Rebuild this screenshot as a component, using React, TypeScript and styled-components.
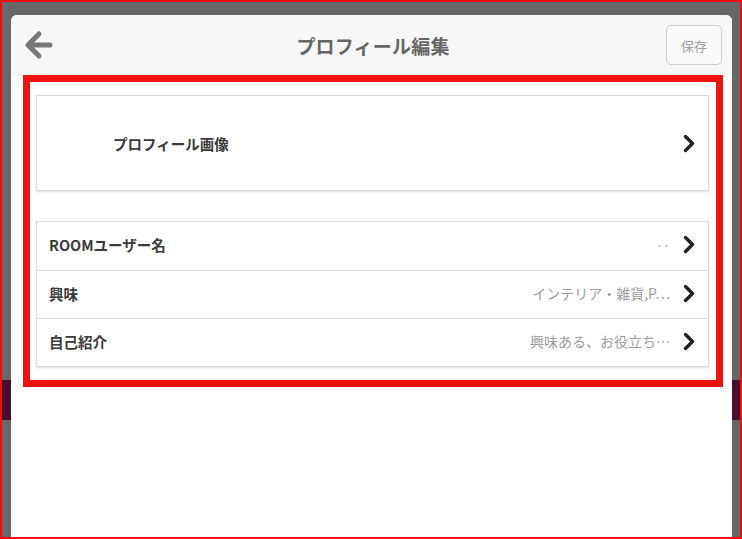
import React from "react";
import styled, { createGlobalStyle } from "styled-components";

const GlobalStyle = createGlobalStyle`
  html, body {
    margin: 0;
    padding: 0;
    background: #ffffff;
  }
  * {
    box-sizing: border-box;
  }
`;

const jp = `"Noto Sans CJK JP", "Noto Sans", sans-serif`;

const Screen = styled.div`
  width: 742px;
  height: 539px;
  border: 2px solid #f20c0c;
  padding: 13px 8px 0 9px;
  display: flex;
  background: linear-gradient(
    to bottom,
    #676767 378px,
    #4b0d2e 378px,
    #4b0d2e 418px,
    #676767 418px
  );
  font-family: ${jp};
`;

const Device = styled.div`
  flex: 1;
  display: flex;
  flex-direction: column;
  background: #ffffff;
  border-radius: 6px 6px 0 0;
  overflow: hidden;
`;

const Header = styled.header`
  height: 60px;
  display: grid;
  grid-template-columns: 1fr auto 1fr;
  align-items: center;
  padding: 0 10px 0 13px;
  background: #f7f7f7;
`;

const BackButton = styled.button`
  justify-self: start;
  display: flex;
  padding: 0;
  border: 0;
  background: none;
`;

const Title = styled.h1`
  margin: 0;
  font-size: 19px;
  font-weight: 700;
  color: #666666;
  letter-spacing: 0.2px;
`;

const SaveButton = styled.button`
  justify-self: end;
  width: 56px;
  height: 40px;
  border: 1.5px solid #cfcfcf;
  border-radius: 5px;
  background: #fafafa;
  color: #a0a0a0;
  font-family: "Liberation Serif", "Noto Sans CJK JP", serif;
  font-size: 13px;
`;

const Content = styled.main`
  flex: 1;
  padding: 0 9px 0 12px;
  background: #ffffff;
`;

const Highlight = styled.section`
  height: 312px;
  border: 7px solid #ee1111;
  padding: 13px 7px 0 6px;
  display: flex;
  flex-direction: column;
  gap: 30px;
`;

const Card = styled.div`
  background: #ffffff;
  border: 1.5px solid #dcdcdc;
  box-shadow: 0 1px 2px rgba(0, 0, 0, 0.12);
`;

const ImageRow = styled(Card)`
  height: 96px;
  display: flex;
  align-items: center;
  padding: 0 13px 0 76px;
`;

const Row = styled.div`
  height: 48px;
  display: flex;
  align-items: center;
  padding: 0 13px 3px 12px;

  & + & {
    border-top: 1.5px solid #dcdcdc;
  }
`;

const Label = styled.span`
  flex: 1;
  font-size: 14.5px;
  font-weight: 700;
  color: #3a3a3a;
`;

const Value = styled.span`
  margin-right: 13px;
  font-size: 14px;
  color: #9c9c9c;
  white-space: nowrap;
`;

const Chevron = () => (
  <svg width="12" height="19" viewBox="0 0 12 19">
    <path
      d="M2.5 2.5 L9.5 9.5 L2.5 16.5"
      fill="none"
      stroke="#222222"
      strokeWidth="3.4"
      strokeLinecap="round"
      strokeLinejoin="round"
    />
  </svg>
);

const BackArrow = () => (
  <svg width="29" height="32" viewBox="0 0 29 32">
    <path
      d="M26 16 H5 M15 5 L4 16 L15 27"
      fill="none"
      stroke="#777777"
      strokeWidth="5"
      strokeLinecap="round"
      strokeLinejoin="round"
    />
  </svg>
);

const rows = [
  { label: "ROOMユーザー名", value: "‥" },
  { label: "興味", value: "インテリア・雑貨,P…" },
  { label: "自己紹介", value: "興味ある、お役立ち…" },
];

export default function App() {
  return (
    <>
      <GlobalStyle />
      <Screen>
        <Device>
          <Header>
            <BackButton aria-label="戻る">
              <BackArrow />
            </BackButton>
            <Title>プロフィール編集</Title>
            <SaveButton>保存</SaveButton>
          </Header>
          <Content>
            <Highlight>
              <ImageRow>
                <Label>プロフィール画像</Label>
                <Chevron />
              </ImageRow>
              <Card>
                {rows.map(r => (
                  <Row key={r.label}>
                    <Label>{r.label}</Label>
                    <Value>{r.value}</Value>
                    <Chevron />
                  </Row>
                ))}
              </Card>
            </Highlight>
          </Content>
        </Device>
      </Screen>
    </>
  );
}
